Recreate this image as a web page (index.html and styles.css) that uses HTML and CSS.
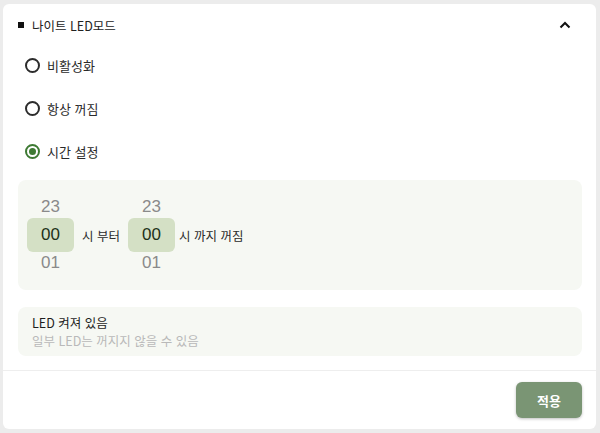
FILE: index.html
```html
<!DOCTYPE html>
<html lang="ko">
<head>
<meta charset="utf-8">
<link rel="stylesheet" href="styles.css">
</head>
<body>
<div class="card">
  <div class="header">
    <span class="bullet"></span>
    <span class="title">나이트 LED모드</span>
    <svg class="chev" width="12" height="8" viewBox="0 0 12 8"><polyline points="1.5,6.5 6,2 10.5,6.5" fill="none" stroke="#111" stroke-width="2"/></svg>
  </div>
  <div class="radio-row"><span class="radio"></span><span class="rlabel">비활성화</span></div>
  <div class="radio-row"><span class="radio"></span><span class="rlabel">항상 꺼짐</span></div>
  <div class="radio-row"><span class="radio on"><span class="dot"></span></span><span class="rlabel">시간 설정</span></div>
  <div class="timebox">
    <div class="picker">
      <span class="num dim">23</span>
      <span class="num sel">00</span>
      <span class="num dim">01</span>
    </div>
    <span class="tlabel">시 부터</span>
    <div class="picker">
      <span class="num dim">23</span>
      <span class="num sel">00</span>
      <span class="num dim">01</span>
    </div>
    <span class="tlabel tlabel2">시 까지 꺼짐</span>
  </div>
  <div class="infobox">
    <div class="info-title">LED 켜져 있음</div>
    <div class="info-sub">일부 LED는 꺼지지 않을 수 있음</div>
  </div>
  <div class="footer">
    <button class="apply">적용</button>
  </div>
</div>
</body>
</html>
```
FILE: styles.css
```css
html, body { margin: 0; padding: 0; }
body {
  background: #ececec;
  width: 600px;
  height: 433px;
  font-family: "Noto Sans CJK KR", "Noto Sans", sans-serif;
  color: #2a2a2a;
  overflow: hidden;
}
.card {
  margin: 4px 0 0 3px;
  width: 593px;
  height: 425px;
  background: #fff;
  border-radius: 6px;
  box-sizing: border-box;
  display: flex;
  flex-direction: column;
}
.header {
  height: 40px;
  display: flex;
  align-items: center;
  padding: 2px 0 0 15px;
  box-sizing: border-box;
}
.bullet {
  width: 6px;
  height: 6px;
  background: #111;
  margin-right: 8px;
}
.title {
  font-size: 12.5px;
  color: #222;
}
.chev {
  margin-left: auto;
  margin-right: 25px;
}
.radio-row {
  height: 43px;
  display: flex;
  align-items: center;
  padding-left: 22px;
}
.radio {
  width: 15px;
  height: 15px;
  border: 2px solid #2c2c2c;
  border-radius: 50%;
  box-sizing: border-box;
  display: flex;
  align-items: center;
  justify-content: center;
  margin-right: 7px;
}
.radio.on { border-color: #3e7a33; }
.dot {
  width: 7px;
  height: 7px;
  border-radius: 50%;
  background: #3e7a33;
}
.rlabel { font-size: 13px; color: #2a2a2a; }
.timebox {
  margin: 7px 0 0 15px;
  width: 564px;
  height: 110px;
  background: #f6f8f3;
  border-radius: 8px;
  display: flex;
  align-items: center;
  padding-left: 9px;
  box-sizing: border-box;
}
.picker {
  display: flex;
  flex-direction: column;
  width: 47px;
}
.num {
  font-family: "Liberation Sans", Arial, sans-serif;
  font-size: 17px;
  text-align: center;
}
.num.dim {
  height: 22px;
  line-height: 22px;
  color: #8a8a8a;
}
.num.sel {
  height: 34px;
  line-height: 34px;
  background: #d4e0c5;
  border-radius: 6px;
  color: #223018;
}
.tlabel {
  font-size: 12.5px;
  color: #2a2a2a;
  margin: 0 8px;
}
.tlabel2 { margin-left: 4px; }
.infobox {
  margin: 17px 0 0 15px;
  width: 564px;
  height: 49px;
  background: #f6f8f3;
  border-radius: 8px;
  box-sizing: border-box;
  padding: 7px 0 0 14px;
  display: flex;
  flex-direction: column;
}
.info-title {
  font-size: 12.5px;
  line-height: 18px;
  color: #1e1e1e;
}
.info-sub {
  font-size: 12.5px;
  line-height: 18px;
  color: #b9b9b9;
}
.footer {
  margin-top: 14px;
  border-top: 1px solid #eeeeee;
  flex: 1;
  display: flex;
  justify-content: flex-end;
  align-items: flex-start;
  padding: 11px 14px 0 0;
}
.apply {
  width: 66px;
  height: 36px;
  border: none;
  border-radius: 6px;
  background: #7a9574;
  color: #fff;
  font-family: "Noto Sans CJK KR", sans-serif;
  font-size: 13px;
  font-weight: 700;
  box-shadow: 0 1px 3px rgba(0,0,0,0.25);
}
```
